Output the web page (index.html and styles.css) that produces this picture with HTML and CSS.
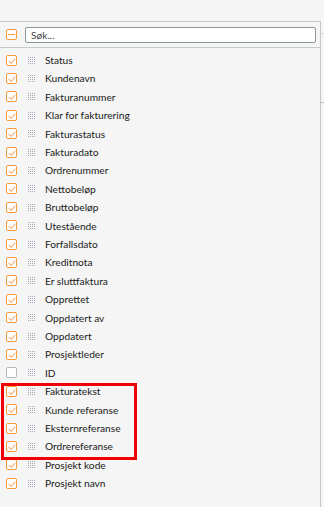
FILE: index.html
```html
<!DOCTYPE html>
<html>
<head>
<meta charset="utf-8">
<link rel="stylesheet" href="styles.css">
</head>
<body>
<svg width="0" height="0" class="defs">
  <defs>
    <g id="grip">
      <rect x="0" y="0" width="1" height="1"/><rect x="2" y="0" width="1" height="1"/><rect x="4" y="0" width="1" height="1"/><rect x="6" y="0" width="1" height="1"/>
      <rect x="0" y="2" width="1" height="1"/><rect x="2" y="2" width="1" height="1"/><rect x="4" y="2" width="1" height="1"/><rect x="6" y="2" width="1" height="1"/>
      <rect x="0" y="4" width="1" height="1"/><rect x="2" y="4" width="1" height="1"/><rect x="4" y="4" width="1" height="1"/><rect x="6" y="4" width="1" height="1"/>
      <rect x="0" y="6" width="1" height="1"/><rect x="2" y="6" width="1" height="1"/><rect x="4" y="6" width="1" height="1"/><rect x="6" y="6" width="1" height="1"/>
    </g>
    <path id="chk" d="M2 5.3 L4.2 7.3 L8 3.2" fill="none" stroke-width="1.1" stroke-linecap="round" stroke-linejoin="round"/>
  </defs>
</svg>
<div class="top"></div>
<div class="main">
  <div class="panel">
    <div class="search-row">
      <span class="cb cb-ind"><span class="minus"></span></span>
      <input class="search" type="text" placeholder="Søk...">
    </div>
    <ul class="list">
      <li class="row"><span class="cb on"><svg viewBox="0 0 9 9"><use href="#chk"/></svg></span><svg class="grip" viewBox="0 0 7 7"><use href="#grip"/></svg><span class="lbl">Status</span></li>
      <li class="row"><span class="cb on"><svg viewBox="0 0 9 9"><use href="#chk"/></svg></span><svg class="grip" viewBox="0 0 7 7"><use href="#grip"/></svg><span class="lbl">Kundenavn</span></li>
      <li class="row"><span class="cb on"><svg viewBox="0 0 9 9"><use href="#chk"/></svg></span><svg class="grip" viewBox="0 0 7 7"><use href="#grip"/></svg><span class="lbl">Fakturanummer</span></li>
      <li class="row"><span class="cb on"><svg viewBox="0 0 9 9"><use href="#chk"/></svg></span><svg class="grip" viewBox="0 0 7 7"><use href="#grip"/></svg><span class="lbl">Klar for fakturering</span></li>
      <li class="row"><span class="cb on"><svg viewBox="0 0 9 9"><use href="#chk"/></svg></span><svg class="grip" viewBox="0 0 7 7"><use href="#grip"/></svg><span class="lbl">Fakturastatus</span></li>
      <li class="row"><span class="cb on"><svg viewBox="0 0 9 9"><use href="#chk"/></svg></span><svg class="grip" viewBox="0 0 7 7"><use href="#grip"/></svg><span class="lbl">Fakturadato</span></li>
      <li class="row"><span class="cb on"><svg viewBox="0 0 9 9"><use href="#chk"/></svg></span><svg class="grip" viewBox="0 0 7 7"><use href="#grip"/></svg><span class="lbl">Ordrenummer</span></li>
      <li class="row"><span class="cb on"><svg viewBox="0 0 9 9"><use href="#chk"/></svg></span><svg class="grip" viewBox="0 0 7 7"><use href="#grip"/></svg><span class="lbl">Nettobeløp</span></li>
      <li class="row"><span class="cb on"><svg viewBox="0 0 9 9"><use href="#chk"/></svg></span><svg class="grip" viewBox="0 0 7 7"><use href="#grip"/></svg><span class="lbl">Bruttobeløp</span></li>
      <li class="row"><span class="cb on"><svg viewBox="0 0 9 9"><use href="#chk"/></svg></span><svg class="grip" viewBox="0 0 7 7"><use href="#grip"/></svg><span class="lbl">Utestående</span></li>
      <li class="row"><span class="cb on"><svg viewBox="0 0 9 9"><use href="#chk"/></svg></span><svg class="grip" viewBox="0 0 7 7"><use href="#grip"/></svg><span class="lbl">Forfallsdato</span></li>
      <li class="row"><span class="cb on"><svg viewBox="0 0 9 9"><use href="#chk"/></svg></span><svg class="grip" viewBox="0 0 7 7"><use href="#grip"/></svg><span class="lbl">Kreditnota</span></li>
      <li class="row"><span class="cb on"><svg viewBox="0 0 9 9"><use href="#chk"/></svg></span><svg class="grip" viewBox="0 0 7 7"><use href="#grip"/></svg><span class="lbl">Er sluttfaktura</span></li>
      <li class="row"><span class="cb on"><svg viewBox="0 0 9 9"><use href="#chk"/></svg></span><svg class="grip" viewBox="0 0 7 7"><use href="#grip"/></svg><span class="lbl">Opprettet</span></li>
      <li class="row"><span class="cb on"><svg viewBox="0 0 9 9"><use href="#chk"/></svg></span><svg class="grip" viewBox="0 0 7 7"><use href="#grip"/></svg><span class="lbl">Oppdatert av</span></li>
      <li class="row"><span class="cb on"><svg viewBox="0 0 9 9"><use href="#chk"/></svg></span><svg class="grip" viewBox="0 0 7 7"><use href="#grip"/></svg><span class="lbl">Oppdatert</span></li>
      <li class="row"><span class="cb on"><svg viewBox="0 0 9 9"><use href="#chk"/></svg></span><svg class="grip" viewBox="0 0 7 7"><use href="#grip"/></svg><span class="lbl">Prosjektleder</span></li>
      <li class="row"><span class="cb"></span><svg class="grip" viewBox="0 0 7 7"><use href="#grip"/></svg><span class="lbl">ID</span></li>
      <li class="group">
        <ul class="list">
          <li class="row"><span class="cb on"><svg viewBox="0 0 9 9"><use href="#chk"/></svg></span><svg class="grip" viewBox="0 0 7 7"><use href="#grip"/></svg><span class="lbl">Fakturatekst</span></li>
          <li class="row"><span class="cb on"><svg viewBox="0 0 9 9"><use href="#chk"/></svg></span><svg class="grip" viewBox="0 0 7 7"><use href="#grip"/></svg><span class="lbl">Kunde referanse</span></li>
          <li class="row"><span class="cb on"><svg viewBox="0 0 9 9"><use href="#chk"/></svg></span><svg class="grip" viewBox="0 0 7 7"><use href="#grip"/></svg><span class="lbl">Eksternreferanse</span></li>
          <li class="row"><span class="cb on"><svg viewBox="0 0 9 9"><use href="#chk"/></svg></span><svg class="grip" viewBox="0 0 7 7"><use href="#grip"/></svg><span class="lbl">Ordrereferanse</span></li>
        </ul>
        <span class="highlight"></span>
      </li>
      <li class="row"><span class="cb on"><svg viewBox="0 0 9 9"><use href="#chk"/></svg></span><svg class="grip" viewBox="0 0 7 7"><use href="#grip"/></svg><span class="lbl">Prosjekt kode</span></li>
      <li class="row"><span class="cb on"><svg viewBox="0 0 9 9"><use href="#chk"/></svg></span><svg class="grip" viewBox="0 0 7 7"><use href="#grip"/></svg><span class="lbl">Prosjekt navn</span></li>
    </ul>
  </div>
  <div class="side">
    <div class="side-a"></div>
  </div>
</div>
</body>
</html>
```
FILE: styles.css
```css
html, body {
  margin: 0;
  padding: 0;
  background: #f4f5f4;
  font-family: "Lato", "Noto Sans", sans-serif;
  font-size: 10.2px;
  color: #1a1a1a;
  height: 507px;
  overflow: hidden;
}
.defs {
  position: absolute;
  width: 0;
  height: 0;
}
.top {
  height: 21px;
}
.main {
  display: flex;
  height: 486px;
}
.panel {
  width: 321px;
  box-sizing: border-box;
  border-top: 1px solid #c4c8c8;
  border-right: 1px solid #c4c8c8;
}
.search-row {
  display: flex;
  align-items: center;
  height: 25px;
  padding: 0 4px 0 6px;
  border-bottom: 1px solid #c4c8c8;
  gap: 8px;
}
.search {
  flex: 1;
  height: 16px;
  box-sizing: border-box;
  border: 1px solid #8c9a9a;
  border-radius: 2px;
  background: #fff;
  padding: 0 5px;
  font-family: inherit;
  font-size: 10.2px;
  outline: none;
}
.search::placeholder {
  color: #444;
}
.list {
  list-style: none;
  margin: 0;
  padding: 0;
}
.panel > .list {
  padding-top: 3px;
}
.row {
  display: flex;
  align-items: center;
  height: 18.4px;
  padding-left: 6px;
}
.cb {
  width: 11px;
  height: 11px;
  box-sizing: border-box;
  border: 1px solid #b4b8bc;
  border-radius: 2px;
  background: #fff;
  flex: none;
  display: inline-flex;
  align-items: center;
  justify-content: center;
}
.cb svg {
  width: 9px;
  height: 9px;
  stroke: #f7b27a;
}
.cb.on, .cb-ind {
  border-color: #f59a3a;
}
.minus {
  width: 7px;
  height: 1px;
  background: #f59a3a;
}
.grip {
  width: 7px;
  height: 7px;
  margin-left: 11px;
  margin-right: 10px;
  flex: none;
  fill: #aca4b8;
}
.lbl {
  white-space: nowrap;
  line-height: 1;
}
.group {
  position: relative;
}
.highlight {
  position: absolute;
  left: 1px;
  top: 1px;
  width: 136px;
  height: 77px;
  box-sizing: border-box;
  border: 3px solid #f00000;
  pointer-events: none;
}
.side {
  flex: 1;
}
.side-a {
  margin-top: 12px;
  height: 68px;
  border-top: 1px solid #d4d8d8;
  border-bottom: 1px solid #b4b8b8;
}
```
